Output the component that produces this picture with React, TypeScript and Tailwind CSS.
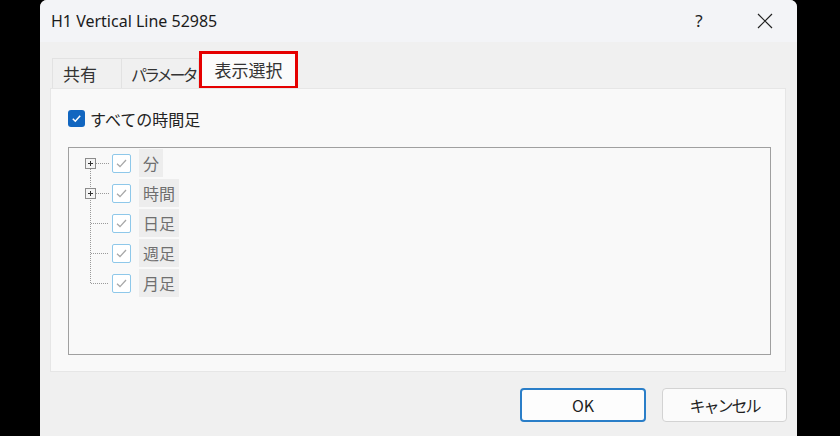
import React from 'react';

const jp = { fontFamily: '"Noto Sans CJK JP", "Noto Sans", sans-serif' };
const ui = { fontFamily: '"Noto Sans", "Noto Sans CJK JP", sans-serif' };

const rows = [
  { label: '分', expand: true },
  { label: '時間', expand: true },
  { label: '日足', expand: false },
  { label: '週足', expand: false },
  { label: '月足', expand: false },
];

function Connector({ index, expand }: { index: number; expand: boolean }) {
  const last = index === rows.length - 1;
  const top = index === 0 ? 15 : 0;
  const bottom = last ? 15 : 30;
  return (
    <svg width="43" height="30" className="shrink-0">
      <line x1="21.5" y1={top} x2="21.5" y2={bottom} stroke="#9a9a9a" strokeDasharray="1 1" />
      <line x1={expand ? 27 : 22} y1="15.5" x2="40" y2="15.5" stroke="#9a9a9a" strokeDasharray="1 1" />
      {expand && (
        <g>
          <rect x="16.5" y="10.5" width="10" height="10" fill="#f4f4f4" stroke="#8c8c8c" />
          <line x1="19" y1="15.5" x2="24" y2="15.5" stroke="#333" />
          <line x1="21.5" y1="13" x2="21.5" y2="18" stroke="#333" />
        </g>
      )}
    </svg>
  );
}

function TreeCheck() {
  return (
    <span className="w-[19px] h-[19px] border border-[#8ec8ea] bg-white rounded-[2px] flex items-center justify-center">
      <svg width="15" height="15" viewBox="0 0 15 15">
        <path d="M3 7.8 L6 10.6 L12 4" fill="none" stroke="#a8a8a8" strokeWidth="1.3" />
      </svg>
    </span>
  );
}

export default function App() {
  return (
    <div className="w-[840px] h-[436px] bg-black pl-[40px] overflow-hidden">
      <div className="w-[757px] h-[436px] bg-[#f0f0f0] rounded-t-[7px] flex flex-col overflow-hidden">
        {/* title bar */}
        <div className="h-[42px] bg-[#f3f4f7] flex items-center pl-[11px] shrink-0">
          <span className="text-[16px] text-[#1b1b1b]" style={ui}>H1 Vertical Line 52985</span>
          <span className="ml-auto text-[17px] text-[#222] w-[20px] text-center" style={ui}>?</span>
          <span className="ml-[47px] mr-[23px] w-[18px] flex items-center justify-center">
            <svg width="16" height="16" viewBox="0 0 16 16">
              <path d="M1 1 L15 15 M15 1 L1 15" stroke="#222" strokeWidth="1.2" />
            </svg>
          </span>
        </div>

        <div className="flex-1 flex flex-col pt-[8px] pl-[10px] pr-[11px]">
          {/* tabs */}
          <div className="flex items-end h-[38px] pl-[2px] whitespace-nowrap" style={jp}>
            <div className="w-[70px] h-[30px] border border-b-0 border-[#e2e2e2] flex items-center pl-[10px] text-[17px] text-[#333]">共有</div>
            <div className="w-[77px] h-[30px] border-t border-r border-[#e2e2e2] flex items-center pl-[9px] text-[16px] tracking-[-3px] text-[#333]">パラメータ</div>
            <div className="w-[99px] h-[38px] border-[3px] border-[#e50000] bg-[#fbfbfb] flex items-center justify-center text-[17px] text-[#333] -mb-[1px]">表示選択</div>
          </div>

          {/* panel */}
          <div className="h-[284px] bg-[#f9f9f9] border border-[#e6e6e6] flex flex-col pl-[17px] pr-[14px]">
            <label className="flex items-center gap-[5px] mt-[20px] h-[19px]" style={jp}>
              <span className="w-[17px] h-[17px] rounded-[3px] bg-[#1266c0] flex items-center justify-center">
                <svg width="11" height="11" viewBox="0 0 11 11">
                  <path d="M1.8 5.8 L4.3 8.2 L9.2 2.8" fill="none" stroke="#fff" strokeWidth="1.5" />
                </svg>
              </span>
              <span className="text-[16px] text-[#222]">すべての時間足</span>
            </label>

            <div className="mt-[19px] h-[208px] border border-[#a0a0a0] bg-[#f9f9f9]">
              {rows.map((r, i) => (
                <div key={r.label} className="flex items-center h-[30px]">
                  <Connector index={i} expand={r.expand} />
                  <TreeCheck />
                  <span className="ml-[8px] px-[4px] h-[28px] flex items-center bg-[#ededed] text-[16px] text-[#6f6f6f]" style={jp}>
                    {r.label}
                  </span>
                </div>
              ))}
            </div>
          </div>

          {/* buttons */}
          <div className="flex justify-end gap-[16px] mt-[16px]" style={jp}>
            <button className="w-[126px] h-[34px] rounded-[4px] border-2 border-[#2a7ec8] bg-[#fdfdfd] text-[16px] text-[#1f1f1f]">OK</button>
            <button className="w-[125px] h-[34px] rounded-[4px] border border-[#d3d3d3] bg-[#fbfbfb] text-[16px] tracking-[-2px] text-[#1f1f1f] mr-[-1px]">キャンセル</button>
          </div>
        </div>
      </div>
    </div>
  );
}
